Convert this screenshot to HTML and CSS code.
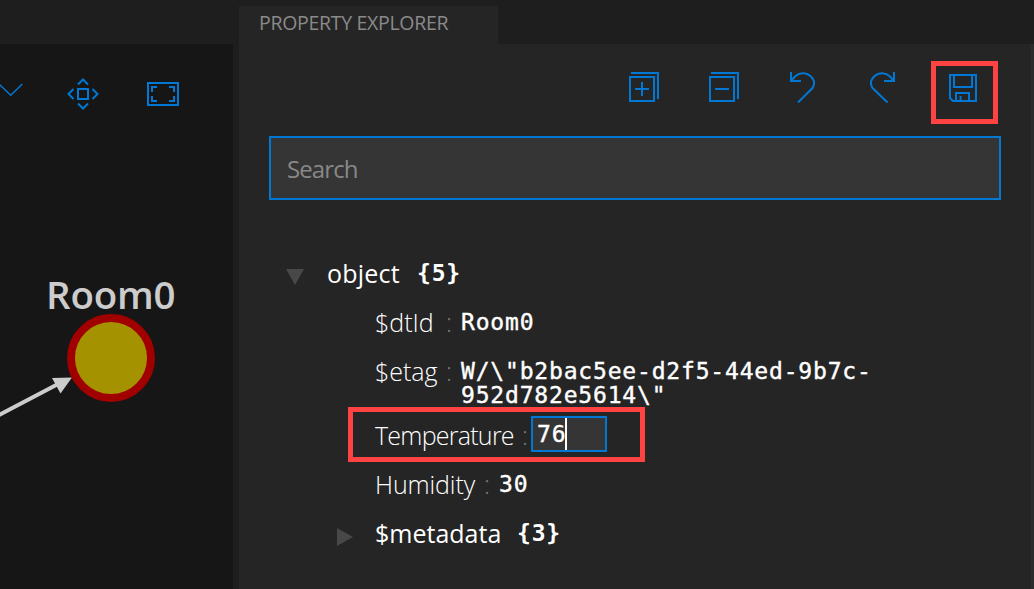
FILE: index.html
```
<!DOCTYPE html>
<html lang="en">
<head>
<meta charset="utf-8">
<title>Property Explorer</title>
<link rel="stylesheet" href="styles.css">
</head>
<body>
<div class="app">
  <section class="graph">
    <div class="graph-top"></div>
    <div class="canvas">
      <div class="graph-tools">
        <svg class="tool-chevron" width="23" height="32" viewBox="0 0 23 32"><path d="M-1 6 10.700 17.300 22.300 6"/></svg>
        <svg width="32" height="32" viewBox="0 0 32 32"><path d="M11 11h10v10H11zM11 6.5 16 1.5 21 6.5M11 25.5 16 30.5 21 25.5M6.5 11 1.5 16 6.5 21M25.5 11 30.5 16 25.5 21"/></svg>
        <svg width="32" height="32" viewBox="0 0 32 32"><path d="M1 5h30v22H1zM5 14V9h5M22 9h5v5M27 18v5h-5M10 23H5v-5"/></svg>
      </div>
      <svg class="scene" width="233" height="180" viewBox="0 250 233 180">
        <path class="edge" d="M-2 415.5 60 383"/>
        <path class="arrow" d="M72 377.6 52 378 60.5 393.5z"/>
        <circle class="node" cx="111" cy="358" r="40"/>
      </svg>
      <span class="node-label">Room0</span>
    </div>
  </section>
  <section class="explorer">
    <header class="tabs"><div class="tab"><span class="tab-title">PROPERTY EXPLORER</span></div></header>
    <div class="panel">
      <div class="toolbar">
        <svg width="32" height="32" viewBox="0 0 32 32"><path d="M2 6h24v24H2zM3 2h27v26M7 18h14M14 11v14"/></svg>
        <svg width="32" height="32" viewBox="0 0 32 32"><path d="M2 6h24v24H2zM3 2h27v26M7 18h14"/></svg>
        <svg width="32" height="32" viewBox="0 0 32 32"><path d="M3 1v9h10M3 10 7 5.500C16-3 31 7 24.500 17L10 31.500"/></svg>
        <svg width="32" height="32" viewBox="0 0 32 32"><path d="M26 1v9H16M26 10 22 5.500C13-3-2 7 4.500 17L19.500 31.500"/></svg>
        <div class="save">
          <svg width="32" height="32" viewBox="0 0 32 32"><path d="M2 4h26v26H5l-3-3zM6 5v11h18V5M8 30v-8h13v8M12.500 25v5"/></svg>
          <i class="save-mark"></i>
        </div>
      </div>
      <div class="search"><span>Search</span></div>
      <div class="tree">
        <div class="row root"><svg class="toggle" width="18" height="16"><path d="M0 0h18L9 16z"/></svg><span class="key obj k-object">object</span><span class="count">{5}</span></div>
        <div class="row"><span class="key k-id">$dtId</span><span class="sep">:</span><span class="value">Room0</span></div>
        <div class="row multi"><span class="key k-etag">$etag</span><span class="sep">:</span><span class="value">W/\"b2bac5ee-d2f5-44ed-9b7c-<br>952d782e5614\"</span></div>
        <div class="row"><span class="key k-temp">Temperature</span><span class="sep">:</span><span class="edit"><span class="value">76</span><i class="caret"></i></span><i class="row-mark"></i></div>
        <div class="row"><span class="key k-hum">Humidity</span><span class="sep">:</span><span class="value">30</span></div>
        <div class="row meta"><svg class="toggle" width="16" height="18"><path d="M0 0v18L16 9z"/></svg><span class="key obj k-meta">$metadata</span><span class="count">{3}</span></div>
      </div>
    </div>
  </section>
  <div class="edge-strip"></div>
</div>
</body>
</html>
```
FILE: styles.css
```
* { box-sizing: border-box; }
body { margin: 0; background: #1e1e1e; font-family: "Open Sans", "Noto Sans", sans-serif; color: #fff; overflow: hidden; }
.app { display: grid; grid-template-columns: 233px 798px 3px; width: 1034px; height: 589px; }
.graph { display: flex; flex-direction: column; }
.graph-top { height: 44px; }
.canvas { position: relative; flex: 1; background: #161616; overflow: hidden; }
svg { display: block; flex: none; fill: none; stroke: #0078d4; stroke-width: 2; }
.graph-tools { display: flex; gap: 48px; padding-top: 34px; }
.tool-chevron { margin-right: -4px; stroke-width: 1.5; }
.scene { position: absolute; left: 0; top: 206px; }
.edge { stroke: #ccc; stroke-width: 4; }
.arrow { fill: #ccc; stroke: none; }
.node { fill: #a59200; stroke: #a00000; stroke-width: 8; }
.node-label { position: absolute; left: 46px; top: 225px; font-size: 38.5px; line-height: 50px; font-weight: 600; letter-spacing: -.2px; color: #ccc; }

.explorer { display: flex; flex-direction: column; margin-left: 6px; }
.tabs { height: 44px; padding-top: 6px; display: flex; }
.tab { width: 259px; background: #252525; padding-left: 20px; }
.tab-title { display: block; font-size: 19.5px; line-height: 34px; letter-spacing: -.3px; color: #8a8a8a; white-space: nowrap; }
.panel { flex: 1; background: #252525; padding: 27px 30px 0; }
.toolbar { display: flex; justify-content: flex-end; gap: 48px; padding-right: 21px; height: 65px; }
.save { position: relative; }
.save-mark { position: absolute; left: -17px; top: -10px; width: 67px; height: 63px; border: 5px solid #ff4343; }
.search { height: 64px; border: 2px solid #0078d4; background: #353535; padding-left: 16px; font-size: 24px; line-height: 62px; letter-spacing: -.9px; color: #888; }
.tree { padding-top: 49px; }
.row { position: relative; display: flex; align-items: center; height: 49px; padding-left: 106px; white-space: nowrap; font-size: 25px; line-height: 49px; }
.root { padding-left: 17px; }
.meta { padding-left: 68px; }
.toggle { fill: #484848; stroke: none; position: relative; top: 3px; }
.key { font-weight: 300; flex: none; }
.obj { font-weight: 400; }
.k-object { width: 90px; margin-left: 23px; letter-spacing: .2px; }
.k-meta { width: 142px; margin-left: 22px; }
.k-id { width: 71px; }
.k-etag { width: 71px; }
.k-temp { width: 147px; letter-spacing: -.75px; }
.k-hum { width: 109px; letter-spacing: -.1px; }
.sep { width: 15px; color: #777; font-weight: 300; }
.value, .count { font-family: "DejaVu Sans Mono", monospace; font-size: 23px; letter-spacing: .82px; position: relative; -webkit-text-stroke: .4px #fff; }
.count { font-weight: 700; -webkit-text-stroke: 0; }
.multi { height: 64px; align-items: flex-start; }
.multi .value { line-height: 24px; padding-top: 12px; }
.edit { display: flex; align-items: center; width: 76px; height: 36px; margin-left: -6px; border: 2px solid #0078d4; background: #353535; padding-left: 4px; position: relative; top: -2px; }
.edit .value { top: 1px; }
.caret { width: 2px; height: 32px; background: #fff; margin-left: -1px; }
.row-mark { position: absolute; left: 79px; top: -4px; width: 297px; height: 55px; border: 5px solid #ff4343; }
.edge-strip { background: #2b2b2b; margin-top: 44px; }
```
